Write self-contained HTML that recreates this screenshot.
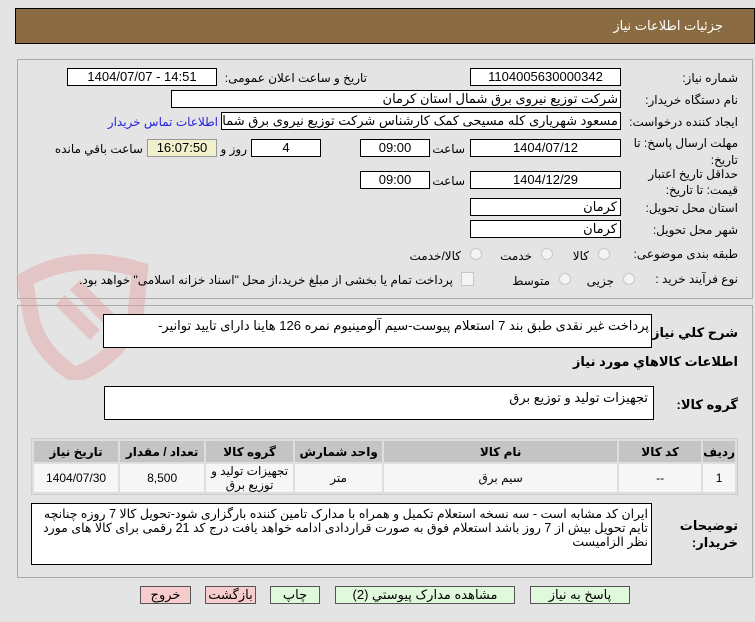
<!DOCTYPE html>
<html><head><meta charset="utf-8"><style>
body{margin:0;width:755px;height:622px;background:#e4e4e4;font-family:"Liberation Sans","DejaVu Sans",sans-serif;font-size:12px;color:#000;position:relative;overflow:hidden}
.a{position:absolute}
.box{position:absolute;background:#fff;border:1px solid #000;box-sizing:border-box;text-align:center;line-height:15px;font-size:13px;white-space:nowrap;overflow:hidden}
.l{position:absolute;direction:rtl;white-space:nowrap;font-size:12px}
.r{right:17px}
.panel{position:absolute;border:1px solid #aaa;box-sizing:border-box}
.rad{position:absolute;width:12px;height:12px;border-radius:50%;border:1px solid #c8c8c8;background:#f4f4f4;box-sizing:border-box}
.btn{position:absolute;top:586px;height:18px;border:1px solid #555;box-sizing:border-box;text-align:center;font-size:13px;line-height:16px;direction:rtl}
table{position:absolute;left:31px;top:438px;width:707px;border-collapse:separate;border-spacing:2px;background:#dedede;border:1px solid #ccc;direction:rtl}
th{background:#c4c4c4;height:21px;font-size:12px;padding:0}
td{background:#f6f6f6;height:28px;text-align:center;font-size:12px;padding:0;line-height:14px}
</style></head><body>
<div class="a" style="left:15px;top:8px;width:740px;height:36px;background:#8b6b42;border:1px solid #000;box-sizing:border-box"></div>
<div class="l" style="right:32px;top:18px;color:#fff;font-size:13px">جزئیات اطلاعات نیاز</div>

<div class="panel" style="left:17px;top:59px;width:736px;height:240px"></div>
<div class="panel" style="left:17px;top:305px;width:736px;height:273px"></div>

<svg class="a" style="left:15px;top:240px" width="140" height="140" viewBox="0 0 140 140" opacity=".45"><path d="M10 40 Q60 10 125 30 L120 80 Q100 120 60 135 Q20 110 15 70 Z" fill="none" stroke="#e2a0a0" stroke-width="16"/><path d="M45 60 L80 95 M60 45 L95 80" stroke="#e2a0a0" stroke-width="14"/></svg>

<div class="l r" style="top:71px">شماره نیاز:</div>
<div class="box" style="left:470px;top:68px;width:151px;height:18px">1104005630000342</div>
<div class="l" style="right:388px;top:71px">تاریخ و ساعت اعلان عمومی:</div>
<div class="box" style="left:67px;top:68px;width:150px;height:18px">1404/07/07 - 14:51</div>

<div class="l r" style="top:93px">نام دستگاه خریدار:</div>
<div class="box" style="left:171px;top:90px;width:450px;height:18px;text-align:right;direction:rtl;padding-right:2px">شرکت توزیع نیروی برق شمال استان کرمان</div>

<div class="l r" style="top:115px">ایجاد کننده درخواست:</div>
<div class="box" style="left:221px;top:112px;width:400px;height:18px;text-align:right;direction:rtl;padding-right:2px">مسعود شهریاری کله مسیحی کمک کارشناس شرکت توزیع نیروی برق شمال استان کرمان</div>
<div class="l" style="right:537px;top:115px;color:#2222dd">اطلاعات تماس خریدار</div>

<div class="l r" style="top:136px">مهلت ارسال پاسخ: تا</div>
<div class="l r" style="top:153px">تاریخ:</div>
<div class="box" style="left:470px;top:139px;width:151px;height:18px">1404/07/12</div>
<div class="l" style="right:290px;top:142px">ساعت</div>
<div class="box" style="left:360px;top:139px;width:70px;height:18px">09:00</div>
<div class="box" style="left:251px;top:139px;width:70px;height:18px">4</div>
<div class="l" style="right:508px;top:142px">روز و</div>
<div class="box" style="left:147px;top:139px;width:70px;height:18px;background:#f0f0cc;border-color:#999">16:07:50</div>
<div class="l" style="right:612px;top:142px">ساعت باقي مانده</div>

<div class="l r" style="top:167px">حداقل تاریخ اعتبار</div>
<div class="l r" style="top:183px">قیمت: تا تاریخ:</div>
<div class="box" style="left:470px;top:171px;width:151px;height:18px">1404/12/29</div>
<div class="l" style="right:290px;top:174px">ساعت</div>
<div class="box" style="left:360px;top:171px;width:70px;height:18px">09:00</div>

<div class="l r" style="top:201px">استان محل تحویل:</div>
<div class="box" style="left:470px;top:198px;width:151px;height:18px;text-align:right;padding-right:3px">کرمان</div>
<div class="l r" style="top:223px">شهر محل تحویل:</div>
<div class="box" style="left:470px;top:220px;width:151px;height:18px;text-align:right;padding-right:3px">کرمان</div>

<div class="l r" style="top:247px">طبقه بندی موضوعی:</div>
<div class="rad" style="left:598px;top:248px"></div><div class="l" style="right:166px;top:249px">کالا</div>
<div class="rad" style="left:541px;top:248px"></div><div class="l" style="right:223px;top:249px">خدمت</div>
<div class="rad" style="left:470px;top:248px"></div><div class="l" style="right:294px;top:249px">کالا/خدمت</div>

<div class="l r" style="top:272px">نوع فرآیند خرید :</div>
<div class="rad" style="left:623px;top:273px"></div><div class="l" style="right:141px;top:274px">جزیی</div>
<div class="rad" style="left:559px;top:273px"></div><div class="l" style="right:205px;top:274px">متوسط</div>
<div class="a" style="left:461px;top:272px;width:11px;height:12px;border:1px solid #c8c8c8;background:#f4f4f4"></div>
<div class="l" style="right:302px;top:273px">پرداخت تمام یا بخشی از مبلغ خرید،از محل "اسناد خزانه اسلامی" خواهد بود.</div>

<div class="l r" style="top:325px;font-weight:bold;font-size:13px">شرح کلي نیاز:</div>
<div class="box" style="left:103px;top:314px;width:549px;height:34px;text-align:right;direction:rtl;padding-right:2px;line-height:22px">پرداخت غیر نقدی طبق بند 7 استعلام پیوست-سیم آلومینیوم نمره 126 هاینا دارای تایید توانیر-</div>
<div class="l r" style="top:354px;font-weight:bold;font-size:13px">اطلاعات کالاهاي مورد نیاز</div>

<div class="l r" style="top:397px;font-weight:bold;font-size:13px">گروه کالا:</div>
<div class="box" style="left:104px;top:386px;width:550px;height:34px;text-align:right;direction:rtl;padding-right:5px;line-height:22px">تجهیزات تولید و توزیع برق</div>

<table><tr><th style="width:27px">ردیف</th><th style="width:82px">کد کالا</th><th style="width:233px">نام کالا</th><th style="width:87px">واحد شمارش</th><th style="width:87px">گروه کالا</th><th style="width:84px">تعداد / مقدار</th><th>تاریخ نیاز</th></tr>
<tr><td>1</td><td>--</td><td>سیم برق</td><td>متر</td><td>تجهیزات تولید و<br>توزیع برق</td><td>8,500</td><td>1404/07/30</td></tr></table>

<div class="l r" style="top:518px;font-weight:bold;font-size:13px">توضیحات</div>
<div class="l r" style="top:535px;font-weight:bold;font-size:13px">خریدار:</div>
<div class="box" style="left:31px;top:503px;width:621px;height:62px;text-align:right;direction:rtl;padding:3px 3px;white-space:normal;line-height:14px;font-size:12.5px">ایران کد مشابه است - سه نسخه استعلام تکمیل و همراه با مدارک تامین کننده بارگزاری شود-تحویل کالا 7 روزه چنانچه تایم تحویل بیش از 7 روز باشد استعلام فوق به صورت قراردادی ادامه خواهد یافت  درج کد 21 رقمی برای کالا های مورد نظر الزامیست</div>

<div class="btn" style="left:140px;width:51px;background:#f7cccc">خروج</div>
<div class="btn" style="left:205px;width:51px;background:#f7cccc">بازگشت</div>
<div class="btn" style="left:270px;width:50px;background:#e0f8dc">چاپ</div>
<div class="btn" style="left:335px;width:180px;background:#e0f8dc">مشاهده مدارک پیوستي (2)</div>
<div class="btn" style="left:530px;width:100px;background:#e0f8dc">پاسخ به نیاز</div>
</body></html>
